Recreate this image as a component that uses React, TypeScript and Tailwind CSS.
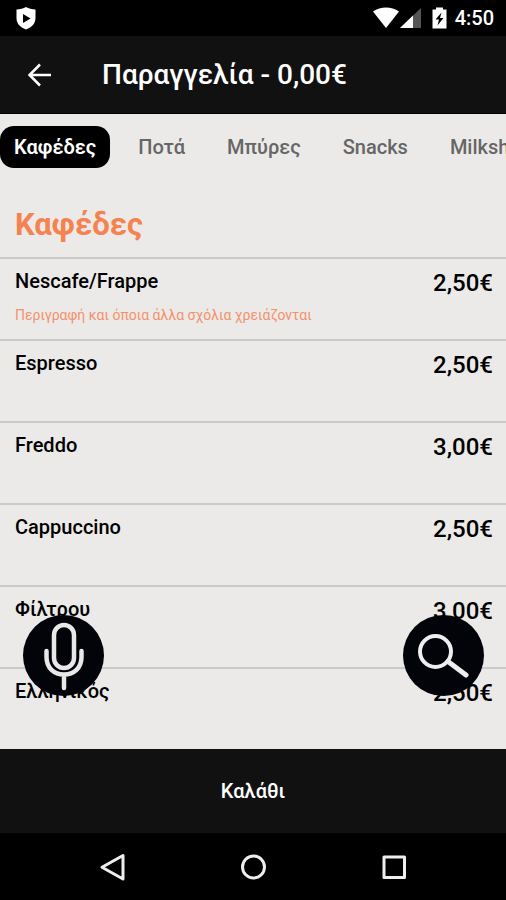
import { useState } from "react";

const categories = ["Καφέδες", "Ποτά", "Μπύρες", "Snacks", "Milkshakes"];

const items = [
  { name: "Nescafe/Frappe", price: "2,50€", note: "Περιγραφή και όποια άλλα σχόλια χρειάζονται" },
  { name: "Espresso", price: "2,50€" },
  { name: "Freddo", price: "3,00€" },
  { name: "Cappuccino", price: "2,50€" },
  { name: "Φίλτρου", price: "3,00€" },
  { name: "Ελληνικός", price: "2,50€" },
];

function StatusBar() {
  return (
    <div className="flex h-9 shrink-0 items-center bg-black pr-3 pl-4 text-white">
      <svg width="20" height="24" viewBox="0 0 20 24" aria-hidden="true">
        <path d="M10 1C7.500 2.600 4 3.300 0.500 3.500V12C0.500 17.500 4 21 10 23.500C16 21 19.500 17.500 19.500 12V3.500C16 3.300 12.500 2.600 10 1Z" fill="#fff" />
        <path d="M7 8V17L14.500 12.500Z" fill="#000" />
      </svg>
      <svg className="ml-auto" width="26" height="22" viewBox="0 0 26 22" aria-hidden="true">
        <path d="M0 4.500C7.500 -0.800 18.500 -0.800 26 4.500L13 21Z" fill="#fff" />
      </svg>
      <svg className="ml-px" width="22" height="22" viewBox="0 0 22 22" aria-hidden="true">
        <path d="M0 21L21 1V21Z" fill="#555" />
        <path d="M0 21L13 8.600V21Z" fill="#fff" />
      </svg>
      <svg className="ml-2.5" width="15" height="22" viewBox="0 0 15 22" aria-hidden="true">
        <path d="M4 0.500H11V2.500H14.500V21.500H0.500V2.500H4Z" fill="#fff" />
        <path d="M9.500 5.500L3.500 12.500H7L5.500 18.500L11.500 11H8Z" fill="#000" />
      </svg>
      <span className="ml-2 text-xl font-medium">4:50</span>
    </div>
  );
}

function Header() {
  return (
    <header className="flex h-[78px] shrink-0 items-center border-b border-black bg-[#111] text-white">
      <button type="button" aria-label="Πίσω" className="ml-6 flex size-8 items-center justify-center">
        <svg width="28" height="26" viewBox="0 0 28 26" fill="none" stroke="#fff" strokeWidth="2.500" aria-hidden="true">
          <path d="M25 13H4M14 2.500L3.500 13L14 23.500" />
        </svg>
      </button>
      <h1 className="ml-[46px] text-[28px] font-medium">Παραγγελία - 0,00€</h1>
    </header>
  );
}

function Tabs({ active, onSelect }: { active: string; onSelect: (name: string) => void }) {
  return (
    <nav className="flex shrink-0 gap-3.5 overflow-x-auto overflow-y-hidden pt-3 [scrollbar-width:none]">
      {categories.map((name) => (
        <button
          key={name}
          type="button"
          onClick={() => onSelect(name)}
          className={`h-[42px] shrink-0 rounded-[14px] px-3.5 text-xl ${
            name === active ? "bg-black font-semibold text-white" : "font-medium text-[#666]"
          }`}
        >
          {name}
        </button>
      ))}
    </nav>
  );
}

function SystemNav() {
  return (
    <div className="flex h-[67px] shrink-0 items-center justify-center gap-[109px] bg-black">
      <button type="button" aria-label="Επιστροφή" className="size-8">
        <svg width="32" height="32" viewBox="0 0 32 32" fill="none" stroke="#eee" strokeWidth="3" strokeLinejoin="round" aria-hidden="true">
          <path d="M27 4.500V28L6 16.250Z" />
        </svg>
      </button>
      <button type="button" aria-label="Αρχική" className="size-8">
        <svg width="32" height="32" viewBox="0 0 32 32" fill="none" stroke="#eee" strokeWidth="3" aria-hidden="true">
          <circle cx="16.500" cy="16" r="11" />
        </svg>
      </button>
      <button type="button" aria-label="Πρόσφατα" className="size-8">
        <svg width="32" height="32" viewBox="0 0 32 32" fill="none" stroke="#eee" strokeWidth="3" strokeLinejoin="round" aria-hidden="true">
          <rect x="6" y="6" width="20.500" height="20.500" />
        </svg>
      </button>
    </div>
  );
}

export default function App() {
  const [active, setActive] = useState("Καφέδες");
  return (
    <div className="flex h-screen flex-col bg-[#ebeae9] font-['Roboto',sans-serif] text-black">
      <StatusBar />
      <Header />
      <main className="relative flex min-h-0 flex-1 flex-col overflow-hidden">
        <Tabs active={active} onSelect={setActive} />
        <h2 className="mt-9 mb-3 px-[15px] text-[31px] leading-[41px] font-bold text-[#f5824f]">{active}</h2>
        <ul className="min-h-0 flex-1 overflow-hidden">
          {items.map((item) => (
            <li key={item.name} className="flex h-[82px] justify-between border-t-2 border-[#cbcac9] pr-[13px] pl-[15px]">
              <div>
                <h3 className="mt-2.5 text-xl leading-6 font-medium">{item.name}</h3>
                {item.note && <p className="mt-3 text-sm leading-5 text-[#f5916a]">{item.note}</p>}
              </div>
              <span className="mt-2.5 text-2xl leading-7 font-medium">{item.price}</span>
            </li>
          ))}
        </ul>
        <button type="button" aria-label="Φωνητική αναζήτηση" className="absolute bottom-[53px] left-[23px] size-[81px] rounded-full bg-[#03030a]">
          <svg width="81" height="81" viewBox="0 0 81 81" fill="none" stroke="#e8e8e8" strokeWidth="4.500" strokeLinecap="round" aria-hidden="true">
            <rect x="31" y="10" width="20" height="43" rx="10" />
            <path d="M23.500 36V42C23.500 53 31 59.500 41 59.500C51 59.500 58.500 53 58.500 42V36M41 60V73" />
          </svg>
        </button>
        <button type="button" aria-label="Αναζήτηση" className="absolute right-[22px] bottom-[53px] size-[81px] rounded-full bg-[#03030a]">
          <svg width="81" height="81" viewBox="0 0 81 81" fill="none" stroke="#eee" strokeWidth="4" strokeLinecap="round" aria-hidden="true">
            <circle cx="32.500" cy="36.500" r="15.500" />
            <path d="M45 46.500L63 60" strokeWidth="5" />
          </svg>
        </button>
      </main>
      <button type="button" className="h-[84px] w-full shrink-0 bg-[#111] text-xl font-medium text-white">
        Καλάθι
      </button>
      <SystemNav />
    </div>
  );
}
